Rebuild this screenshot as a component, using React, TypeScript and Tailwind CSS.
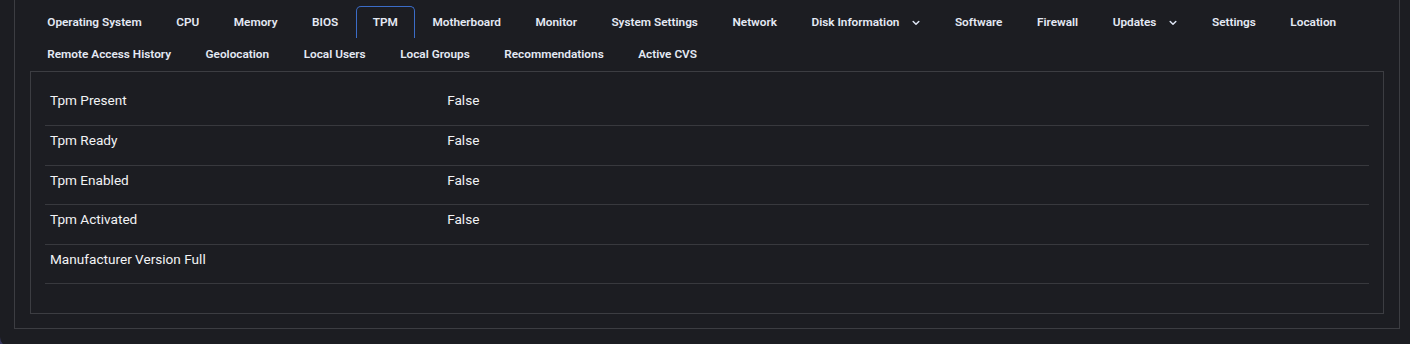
type Tab = { label: string; dropdown?: boolean };

const ROW_ONE: Tab[] = [
  { label: "Operating System" },
  { label: "CPU" },
  { label: "Memory" },
  { label: "BIOS" },
  { label: "TPM" },
  { label: "Motherboard" },
  { label: "Monitor" },
  { label: "System Settings" },
  { label: "Network" },
  { label: "Disk Information", dropdown: true },
  { label: "Software" },
  { label: "Firewall" },
  { label: "Updates", dropdown: true },
  { label: "Settings" },
  { label: "Location" },
];

const ROW_TWO: Tab[] = [
  { label: "Remote Access History" },
  { label: "Geolocation" },
  { label: "Local Users" },
  { label: "Local Groups" },
  { label: "Recommendations" },
  { label: "Active CVS" },
];

const TPM_ROWS = [
  { name: "Tpm Present", value: "False" },
  { name: "Tpm Ready", value: "False" },
  { name: "Tpm Enabled", value: "False" },
  { name: "Tpm Activated", value: "False" },
  { name: "Manufacturer Version Full", value: "" },
];

function Chevron() {
  return (
    <svg width="8" height="6" viewBox="0 0 8 6" fill="none" className="text-[#dfe6f5]">
      <path d="M1.2 1.5 4 4.2 6.8 1.5" stroke="currentColor" strokeWidth="1.5" strokeLinecap="round" strokeLinejoin="round" />
    </svg>
  );
}

function TabButton({ tab, active }: { tab: Tab; active: boolean }) {
  return (
    <button
      type="button"
      className={
        active
          ? "flex h-[32px] items-center gap-[13px] rounded-t-[5px] border border-b-0 border-[#3b6cc7] px-[16.25px] text-[11.8px] font-semibold text-[#e4e9f4]"
          : "flex h-[32px] items-center gap-[13px] border border-b-0 border-transparent px-[16.25px] text-[11.8px] font-semibold text-[#e4e9f4]"
      }
    >
      {tab.label}
      {tab.dropdown && <Chevron />}
    </button>
  );
}

export default function App() {
  return (
    <div
      className="h-[344px] overflow-hidden bg-[#383860]"
      style={{ fontFamily: "Roboto, 'Noto Sans', sans-serif" }}
    >
      <div className="h-[347px] rounded-bl-[10px] bg-[#1c1d22] pl-[14px] pr-[10px]">
        <div className="border-x border-b border-[#3c3d42] px-[15px] pb-[14px] pt-[6px]">
          <div className="flex flex-wrap">
            {ROW_ONE.map((t) => (
              <TabButton key={t.label} tab={t} active={t.label === "TPM"} />
            ))}
          </div>
          <div className="flex flex-wrap">
            {ROW_TWO.map((t) => (
              <TabButton key={t.label} tab={t} active={false} />
            ))}
          </div>
          <div className="mt-[1px] border border-[#3c3d42] px-[14px] pb-[29px] pt-[14px]">
            <table className="w-full border-collapse">
              <tbody>
                {TPM_ROWS.map((r) => (
                  <tr key={r.name} className="h-[39.5px] border-b border-[#38393e] align-top">
                    <td className="w-[30%] pl-[5px] pt-[4px] text-[13.6px] leading-[20px] text-[#f2f3f5]">
                      {r.name}
                    </td>
                    <td className="pl-[5px] pt-[4px] text-[13.6px] leading-[20px] text-[#f2f3f5]">
                      {r.value}
                    </td>
                  </tr>
                ))}
              </tbody>
            </table>
          </div>
        </div>
      </div>
    </div>
  );
}
